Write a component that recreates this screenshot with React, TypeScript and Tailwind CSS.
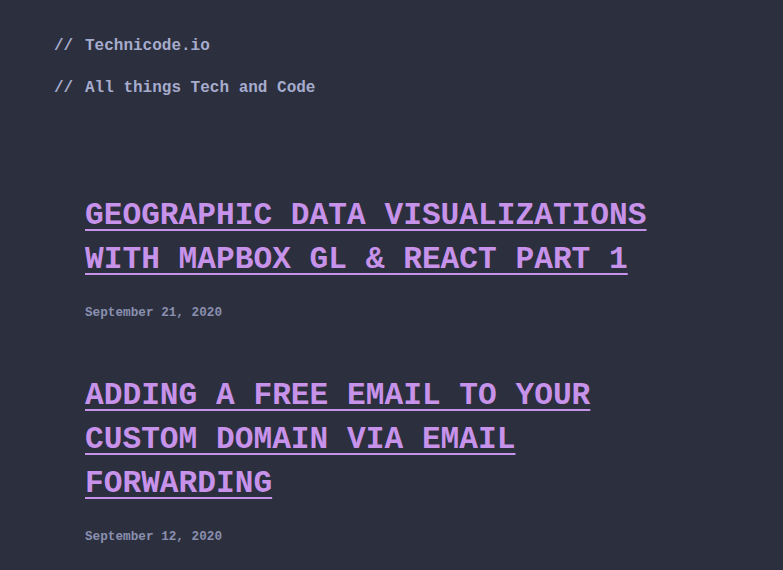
import React from 'react';

interface Post {
  id: number;
  title: string;
  date: string;
}

const posts: Post[] = [
  { id: 1, title: 'Geographic Data Visualizations with Mapbox GL & React Part 1', date: 'September 21, 2020' },
  { id: 2, title: 'Adding a Free Email to Your Custom Domain via Email Forwarding', date: 'September 12, 2020' },
];

export default function App() {
  return (
    <div className="min-h-[570px] bg-[#2c2f3d] font-['Liberation_Mono','Courier_New',monospace] font-bold">
      {/* Header */}
      <header className="pl-[54px] pt-[34px] text-[16px] leading-[24px] text-[#a6accd]">
        <p className="mb-[18px] flex">
          <span className="w-[31px] shrink-0">//</span>
          <span>Technicode.io</span>
        </p>
        <p className="flex">
          <span className="w-[31px] shrink-0">//</span>
          <span>All things Tech and Code</span>
        </p>
      </header>

      {/* Posts */}
      <main className="pl-[85px] pt-[94px]">
        {posts.map((post, i) => (
          <article key={post.id} className={i > 0 ? 'mt-[51px]' : ''}>
            <h2 className="w-[600px] text-[31.2px] leading-[44px] uppercase text-[#c792ea]">
              <a href="#" className="underline decoration-2 underline-offset-[5px]">
                {post.title}
              </a>
            </h2>
            <p className="mt-[21px] text-[12.7px] leading-[20px] text-[#8a8fb0]">{post.date}</p>
          </article>
        ))}
      </main>
    </div>
  );
}
